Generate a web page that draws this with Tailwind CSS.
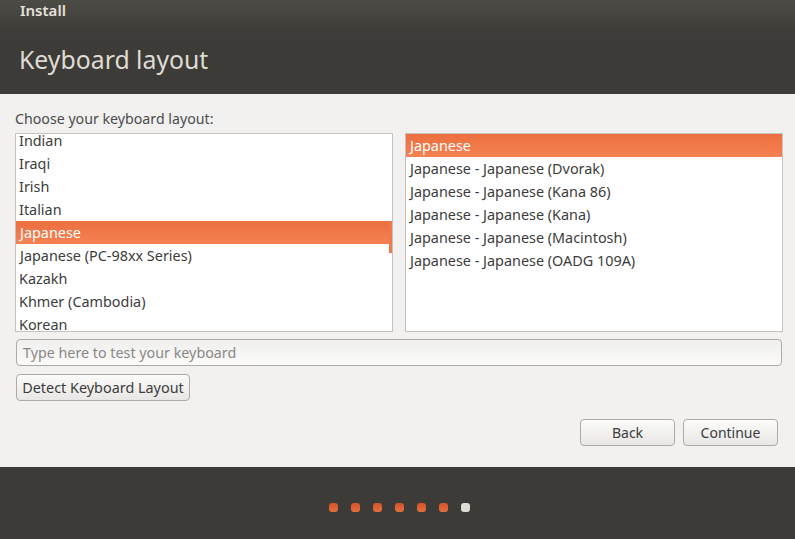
<!DOCTYPE html>
<html lang="en">
<head>
  <meta charset="UTF-8">
  <title>Install</title>
  <script src="https://cdn.jsdelivr.net/npm/@tailwindcss/browser@4"></script>
</head>
<body class="w-[795px] h-[539px] overflow-hidden bg-[#f2f1f0] font-['Noto_Sans',sans-serif] text-[14px] text-[#3c3c3c]">
  <!-- header -->
  <div class="h-[94px] px-5 bg-gradient-to-b from-[#4d4b46] via-[#3e3c38] via-[35%] to-[#3c3b37]">
    <div class="h-[20px] leading-[20px] text-[15px] font-semibold text-[#e4e2dc]">Install</div>
    <div class="mt-[15px] -ml-px h-[48px] leading-[48px] text-[24.8px] text-[#dfdbd2]">Keyboard layout</div>
  </div>

  <!-- content -->
  <div class="h-[373px] pl-[15px] pr-3 flex flex-col">
    <div class="mt-[14px] h-[23px] leading-[22px] text-[14.2px] text-[#4c4c4c]">Choose your keyboard layout:</div>
    <div class="mt-[2px] flex gap-3 text-[14.4px]">
      <div class="relative w-[378px] h-[199px] overflow-hidden bg-white border border-[#c6c3bf]">
        <div class="-mt-[5px]">
          <div class="h-[23px] leading-[23px] px-[3px]">Indian</div>
          <div class="h-[23px] leading-[23px] px-[3px]">Iraqi</div>
          <div class="h-[23px] leading-[23px] px-[3px]">Irish</div>
          <div class="h-[23px] leading-[23px] px-[3px]">Italian</div>
          <div class="h-[23px] leading-[23px] px-[4px] text-white bg-gradient-to-b from-[#ec6f3f] to-[#f58152]">Japanese</div>
          <div class="h-[23px] leading-[23px] px-[4px]">Japanese (PC-98xx Series)</div>
          <div class="h-[23px] leading-[23px] px-[3px]">Kazakh</div>
          <div class="h-[23px] leading-[23px] px-[3px]">Khmer (Cambodia)</div>
          <div class="h-[23px] leading-[23px] px-[3px]">Korean</div>
        </div>
        <div class="absolute right-0 top-[87px] w-[3px] h-[32px] bg-[#f0784a]"></div>
      </div>
      <div class="w-[378px] h-[199px] overflow-hidden bg-white border border-[#c6c3bf]">
        <div class="h-[23px] leading-[23px] px-[4px] text-white bg-gradient-to-b from-[#ec6f3f] to-[#f58152]">Japanese</div>
        <div class="h-[23px] leading-[23px] px-[4px]">Japanese - Japanese (Dvorak)</div>
        <div class="h-[23px] leading-[23px] px-[4px]">Japanese - Japanese (Kana 86)</div>
        <div class="h-[23px] leading-[23px] px-[4px]">Japanese - Japanese (Kana)</div>
        <div class="h-[23px] leading-[23px] px-[4px]">Japanese - Japanese (Macintosh)</div>
        <div class="h-[23px] leading-[23px] px-[4px]">Japanese - Japanese (OADG 109A)</div>
      </div>
    </div>
    <div class="mt-[7px] ml-px w-[766px] h-[27px] leading-[25px] px-[6px] text-[14.3px] rounded-[4px] border border-[#aeaba7] bg-gradient-to-b from-[#f0efee] to-[#fbfbfa] text-[#8a8886]">Type here to test your keyboard</div>
    <div class="mt-[8px] ml-px w-[174px] h-[27px] leading-[25px] text-center text-[14.4px] rounded-[4px] border border-[#aeaba7] bg-gradient-to-b from-[#fbfbfa] to-[#e9e7e5]">Detect Keyboard Layout</div>
    <div class="mt-[18px] flex justify-end gap-[8px] pr-[5px]">
      <div class="w-[95px] h-[27px] leading-[25px] text-center rounded-[4px] border border-[#aeaba7] bg-gradient-to-b from-[#fbfbfa] to-[#e9e7e5]">Back</div>
      <div class="w-[95px] h-[27px] leading-[25px] text-center rounded-[4px] border border-[#aeaba7] bg-gradient-to-b from-[#fbfbfa] to-[#e9e7e5]">Continue</div>
    </div>
  </div>

  <!-- footer with progress dots -->
  <div class="h-[72px] bg-[#3c3b37] flex justify-center items-start pt-[36px] pl-[3px] gap-[13px]">
    <div class="w-[9px] h-[9px] rounded-[3px] blur-[0.5px] bg-gradient-to-b from-[#d4522a] to-[#e2703f]"></div>
    <div class="w-[9px] h-[9px] rounded-[3px] blur-[0.5px] bg-gradient-to-b from-[#d4522a] to-[#e2703f]"></div>
    <div class="w-[9px] h-[9px] rounded-[3px] blur-[0.5px] bg-gradient-to-b from-[#d4522a] to-[#e2703f]"></div>
    <div class="w-[9px] h-[9px] rounded-[3px] blur-[0.5px] bg-gradient-to-b from-[#d4522a] to-[#e2703f]"></div>
    <div class="w-[9px] h-[9px] rounded-[3px] blur-[0.5px] bg-gradient-to-b from-[#d4522a] to-[#e2703f]"></div>
    <div class="w-[9px] h-[9px] rounded-[3px] blur-[0.5px] bg-gradient-to-b from-[#d4522a] to-[#e2703f]"></div>
    <div class="w-[9px] h-[9px] rounded-[3px] blur-[0.5px] bg-[#dfdcd8]"></div>
  </div>
</body>
</html>
